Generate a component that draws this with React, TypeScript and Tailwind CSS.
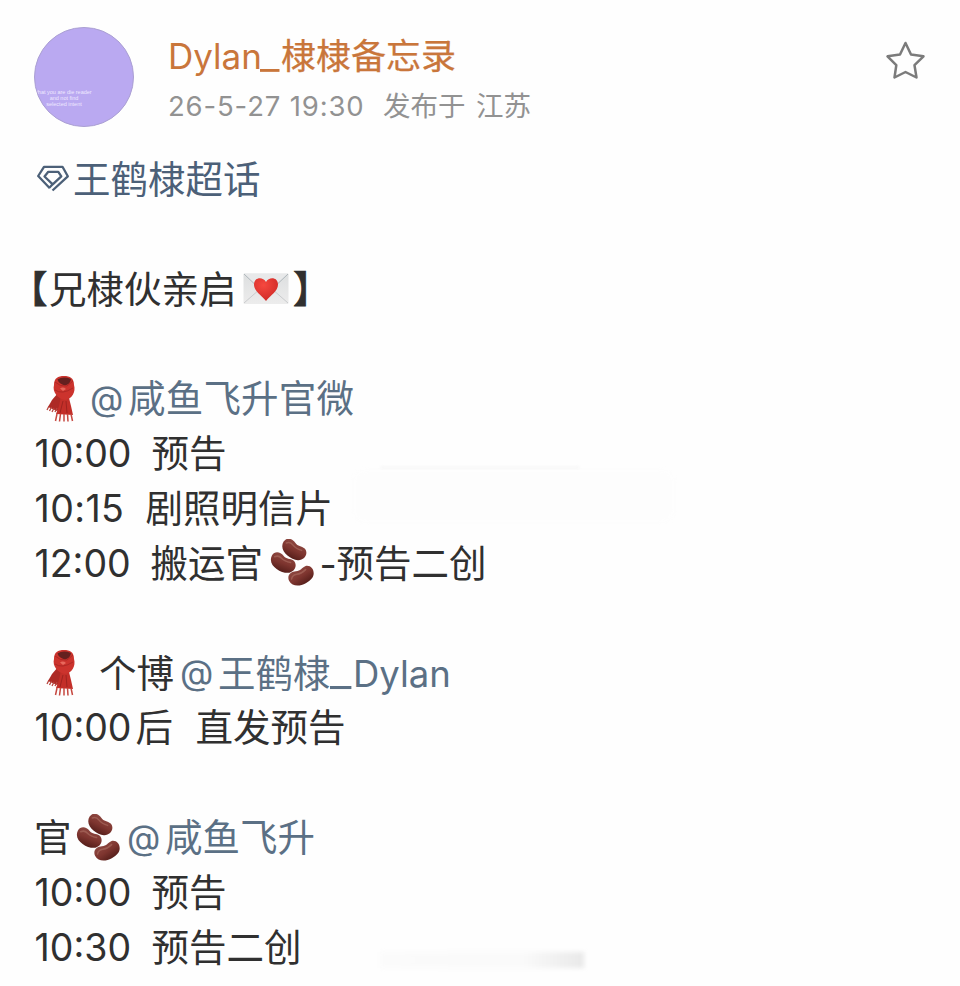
import type { ReactNode } from "react";

const LATIN = "font-['Inter','Noto_Sans_CJK_SC',sans-serif]";
const HAN = "font-['Noto_Sans_CJK_SC',sans-serif] pb-[5px]";

function Latin({ className = "", children }: { className?: string; children: ReactNode }) {
  return <span className={`${LATIN} shrink-0 whitespace-pre ${className}`}>{children}</span>;
}

function Han({ className = "", children }: { className?: string; children: ReactNode }) {
  return <span className={`${HAN} shrink-0 whitespace-pre ${className}`}>{children}</span>;
}

function Line({ children }: { children?: ReactNode }) {
  return <div className="flex h-[54.85px] items-center leading-[54px]">{children}</div>;
}

function Time({ className = "", children }: { className?: string; children: ReactNode }) {
  return <Latin className={`ml-[34.5px] pt-px ${className}`}>{children}</Latin>;
}

function At({ className = "" }: { className?: string }) {
  return <Latin className={`text-[34.500px] text-[#5b7085] ${className}`}>@</Latin>;
}

function Gem() {
  return (
    <svg className="ml-[37px] h-[30px] w-[32px] shrink-0" viewBox="0 0 32 30" fill="none" stroke="#4c6078" strokeWidth="2.3" strokeLinejoin="round">
      <path d="M15.500 26.500 30.800 12.300 25.500 2.800H7L1.200 12 12.800 24.200" />
      <path d="M12.300 23.800 15.700 20.300 24.300 12.300 21.300 7.800H11.300L7.500 12.500 15.700 20.300" />
    </svg>
  );
}

function Star() {
  return (
    <svg className="h-[42px] w-[42px]" viewBox="0 0 42 42" fill="none" stroke="#7b7b7b" strokeWidth="2.5" strokeLinejoin="round">
      <path d="M20.500 3 26 14.500 38.500 16.300 29.500 25.200 31.500 37.500 20.500 32 9.500 37.500 11.300 25.200 2.500 16.300 15 14.500Z" />
    </svg>
  );
}

function Envelope() {
  return (
    <svg className="h-[32px] w-[46px] shrink-0" viewBox="0 0 46 32">
      <defs>
        <radialGradient id="heart" cx=".4" cy=".3" r=".8">
          <stop offset="0" stopColor="#f6483f" />
          <stop offset="1" stopColor="#cb2724" />
        </radialGradient>
        <linearGradient id="paper" x2="0" y2="1">
          <stop offset="0" stopColor="#dddfe0" />
          <stop offset="1" stopColor="#ececec" />
        </linearGradient>
      </defs>
      <rect x=".5" y=".5" width="45" height="30.500" rx="1" fill="url(#paper)" />
      <path d="M1 30 17 16M45 30 29 16" stroke="#c9cbcd" fill="none" />
      <path d="M1 1 19 18Q23 21 27 18L45 1" fill="#e8e9ea" stroke="#aeb6bb" />
      <path d="M23 28C18 22 11 18 11 11.500 11 4 20 3.500 23 9 26 3.500 35 4 35 11.500 35 18 28 22 23 28Z" fill="url(#heart)" />
    </svg>
  );
}

function Scarf() {
  return (
    <svg className="ml-[46px] h-[48px] w-[31px] shrink-0" viewBox="0 0 31 48">
      <path d="M12 18 19 24 14 34 11 36 2 32 6 25Z" fill="#ad2a25" />
      <path d="m3 31-2 4m4.500-3-2 4m4.500-3-2 4m5-4-2 4" stroke="#b8453e" strokeWidth="1.300" />
      <path d="M15 21 23 23 25 31 27 40 10 39 13 31Z" fill="#c32f29" />
      <path d="M11 39 9.500 46M14.500 39 13.500 46.500M18 39v7.500M21.500 39l.5 7.500M25 39l1.500 7" stroke="#c64840" strokeWidth="1.500" />
      <path d="M17 26 14 38M20 26 21 38" stroke="#95201d" strokeWidth=".8" />
      <path d="M8 10C8 3 12 1 18 1S28 3 28 10C30 17 26 24 19 25 12 24 6 17 8 10Z" fill="#cc332d" />
      <path d="M11.500 4.500Q17 1 25 4 24.500 9 19 10.500 13 9 11.500 4.500Z" fill="#65201f" />
      <path d="M9 7Q14 12 21 11L27 6M9 15Q16 20 27 13" fill="none" stroke="#ae2824" strokeWidth="1" />
      <path d="M14 13.500Q17 11.500 20 14L17 16Z" fill="#e8685c" />
    </svg>
  );
}

function Bean({ transform }: { transform: string }) {
  return (
    <g transform={transform}>
      <path d="M-13-3C-12-9-6-9.500-2-7 2-4.500 5-7 9-6 15-3.500 14 5 8 7.500 0 10.500-14 7-13-3Z" fill="url(#bean)" />
      <path d="M-10-3Q-7-6-3-4T7-3" stroke="#b5796c" strokeWidth="1.500" fill="none" strokeLinecap="round" opacity=".5" />
    </g>
  );
}

function Beans({ className = "" }: { className?: string }) {
  return (
    <svg className={`h-[48px] w-[46px] shrink-0 ${className}`} viewBox="0 0 46 48">
      <defs>
        <linearGradient id="bean" x2="0" y2="1">
          <stop offset="0" stopColor="#8d4740" />
          <stop offset=".5" stopColor="#7e352f" />
          <stop offset="1" stopColor="#571f1b" />
        </linearGradient>
      </defs>
      <Bean transform="translate(25 11) rotate(26)" />
      <Bean transform="translate(14 24) rotate(20)" />
      <Bean transform="translate(32.500 37) rotate(-34)" />
    </svg>
  );
}

function Avatar() {
  return (
    <div className="ml-[34px] mt-[27px] h-[100px] w-[100px] shrink-0 overflow-hidden rounded-full border border-[#aba0d3] bg-[#baa9f1] pt-[61px] font-['Liberation_Sans',sans-serif] text-[5.5px] leading-[6px] text-[#eee8ff]">
      <div className="w-[58px] whitespace-nowrap text-center">
        <div>that you are die reader</div>
        <div>and not find</div>
        <div>selected intent</div>
      </div>
    </div>
  );
}

export default function App() {
  return (
    <main className="relative h-[986px] w-[960px] overflow-hidden bg-[#fefefe] text-[37.500px] text-[#303030]">
      <header className="flex h-[152px]">
        <Avatar />
        <div className="ml-[34px] flex-1 pt-[31px]">
          <div className="flex h-[50px] items-center text-[35px] leading-[50px] text-[#c9763b]">
            <Latin className="w-[92px]">Dylan</Latin>
            <Latin className="w-[21px] origin-left scale-x-[1.22]">_</Latin>
            <Han className="[-webkit-text-stroke:0.25px_currentColor]">棣棣备忘录</Han>
          </div>
          <div className="mt-[5px] flex h-[40px] items-center text-[27.500px] leading-[40px] text-[#929292]">
            <Latin className="w-[215px] tracking-[0.85px]">26-5-27 19:30</Latin>
            <Han className="w-[93px] pb-0">发布于</Han>
            <Han className="pb-0">江苏</Han>
          </div>
        </div>
        <div className="mr-[33px] mt-[40px]">
          <Star />
        </div>
      </header>
      <article>
        <Line>
          <span className="flex items-center text-[#4c6078]">
            <Gem />
            <Han className="ml-[4px]">王鹤棣超话</Han>
          </span>
        </Line>
        <Line />
        <Line>
          <Han className="ml-[10px] w-[39px] [-webkit-text-stroke:0.8px_currentColor]">【</Han>
          <Han className="w-[194px]">兄棣伙亲启</Han>
          <Envelope />
          <Han className="ml-[4px] [-webkit-text-stroke:0.8px_currentColor]">】</Han>
        </Line>
        <Line />
        <Line>
          <Scarf />
          <At className="ml-[13px] w-[38px]" />
          <Han className="tracking-[0.200px] text-[#5b7085]">咸鱼飞升官微</Han>
        </Line>
        <Line>
          <Time className="w-[117px]">10:00</Time>
          <Han>预告</Han>
        </Line>
        <Line>
          <Time className="w-[111px] tracking-[0.4px]">10:15</Time>
          <Han>剧照明信片</Han>
        </Line>
        <Line>
          <Time className="w-[116px]">12:00</Time>
          <Han className="w-[118px]">搬运官</Han>
          <Beans />
          <Latin className="ml-[5px] w-[17px] pt-[3px]">-</Latin>
          <Han>预告二创</Han>
        </Line>
        <Line />
        <Line>
          <Scarf />
          <Han className="ml-[22px] w-[81px]">个博</Han>
          <At className="w-[38px]" />
          <Han className="w-[112px] text-[#5b7085]">王鹤棣</Han>
          <Latin className="w-[23px] origin-left scale-x-[1.25] text-[#5b7085]">_</Latin>
          <Latin className="pt-px text-[36.500px] text-[#5b7085]">Dylan</Latin>
        </Line>
        <Line>
          <Time className="w-[101px]">10:00</Time>
          <Han className="w-[60px]">后</Han>
          <Han>直发预告</Han>
        </Line>
        <Line />
        <Line>
          <Han className="ml-[34px] w-[41px]">官</Han>
          <Beans />
          <At className="ml-[6px] w-[38px]" />
          <Han className="text-[#5b7085]">咸鱼飞升</Han>
        </Line>
        <Line>
          <Time className="w-[117px]">10:00</Time>
          <Han>预告</Han>
        </Line>
        <Line>
          <Time className="w-[117px]">10:30</Time>
          <Han>预告二创</Han>
        </Line>
      </article>
      <div className="absolute left-[380px] top-[952px] h-[16px] w-[204px] bg-linear-to-r from-[#fbfbfb] from-0% via-[#fafafa] via-70% to-[#e9e9e9] blur-[2px]" />
      <div className="absolute left-[354px] top-[470px] h-[52px] w-[320px] rounded-[12px] bg-[#fdfdfd] blur-[2px]" />
      <div className="absolute left-[380px] top-[466px] h-[3px] w-[200px] rounded-full bg-[#f8f8f8] blur-[1px]" />
    </main>
  );
}
